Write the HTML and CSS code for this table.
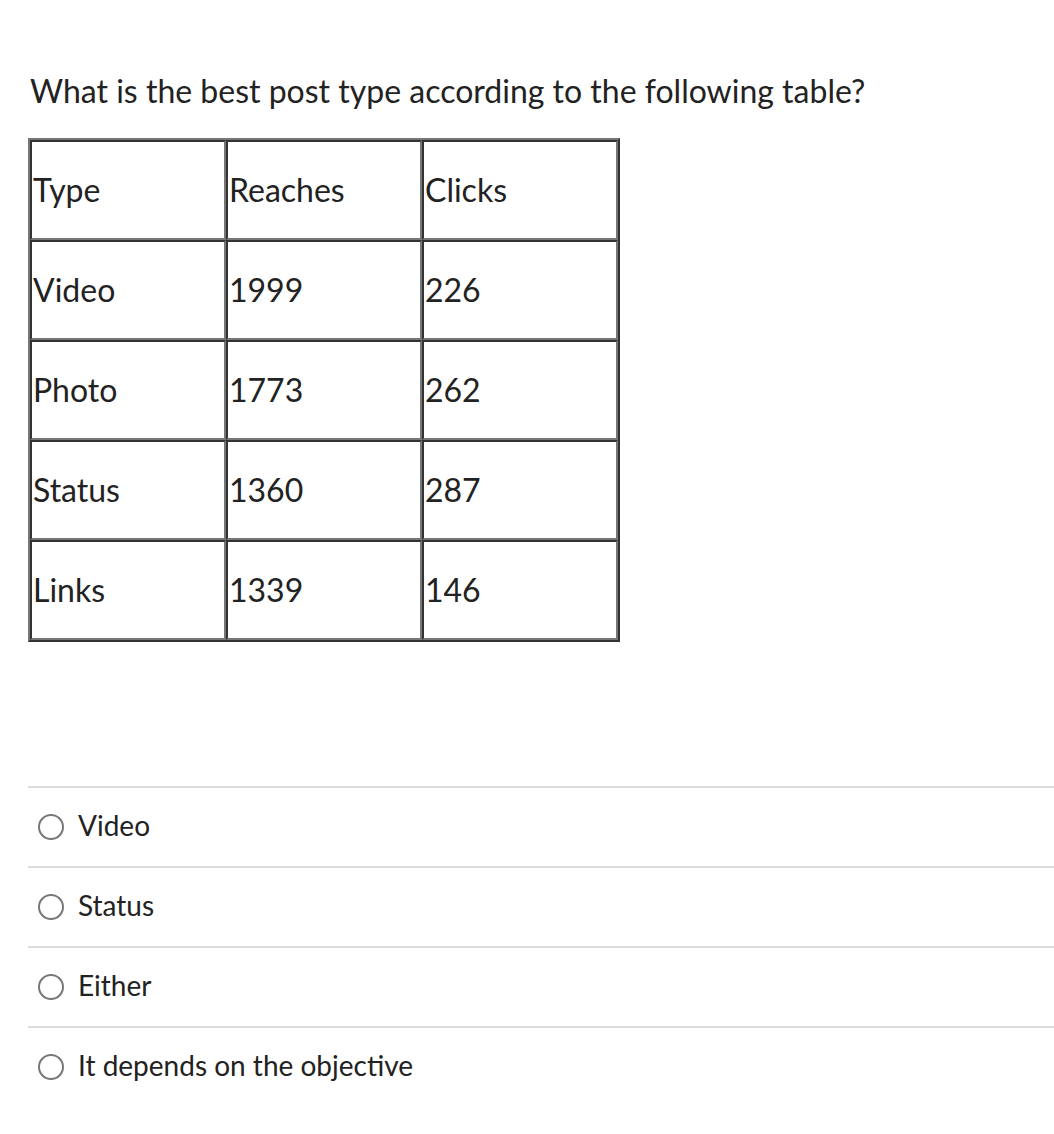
FILE: index.html
```html
<!DOCTYPE html>
<html>
<head>
<meta charset="utf-8">
<link rel="stylesheet" href="styles.css">
</head>
<body>
<div class="question">
  <p class="prompt">What is the best post type according to the following table?</p>
  <table class="data">
    <tr><td>Type</td><td>Reaches</td><td>Clicks</td></tr>
    <tr><td>Video</td><td>1999</td><td>226</td></tr>
    <tr><td>Photo</td><td>1773</td><td>262</td></tr>
    <tr><td>Status</td><td>1360</td><td>287</td></tr>
    <tr><td>Links</td><td>1339</td><td>146</td></tr>
  </table>
  <div class="answers">
    <label class="answer"><span class="radio"></span><span class="label">Video</span></label>
    <label class="answer"><span class="radio"></span><span class="label">Status</span></label>
    <label class="answer"><span class="radio"></span><span class="label">Either</span></label>
    <label class="answer"><span class="radio"></span><span class="label">It depends on the objective</span></label>
  </div>
</div>
</body>
</html>
```
FILE: styles.css
```css
html, body {
  margin: 0;
  padding: 0;
  background: #fff;
}
body {
  font-family: Lato, "Liberation Sans", sans-serif;
  color: #222;
}
.question {
  padding: 71px 0 0 28px;
}
.prompt {
  margin: 0 0 0 2px;
  font-size: 32px;
  line-height: 40px;
  color: #222;
}
.data {
  margin-top: 27px;
  border-collapse: separate;
  border-spacing: 0;
  border-style: solid;
  border-width: 2px;
  border-color: #777 #333 #333 #777;
}
.data td {
  width: 191px;
  height: 96px;
  padding: 0 0 0 1px;
  font-size: 32px;
  line-height: 36px;
  color: #222;
  border-style: solid;
  border-width: 2px;
  border-color: #333 #777 #777 #333;
  vertical-align: middle;
}
.answers {
  margin-top: 144px;
}
.answer {
  display: flex;
  align-items: center;
  height: 78px;
  border-top: 2px solid #ddd;
  font-size: 28px;
  color: #222;
}
.radio {
  box-sizing: border-box;
  width: 26px;
  height: 26px;
  border: 2px solid #777;
  border-radius: 50%;
  margin: 0 14px 0 10px;
  flex: none;
}
.label {
  line-height: 32px;
  margin-bottom: 4px;
}
```
